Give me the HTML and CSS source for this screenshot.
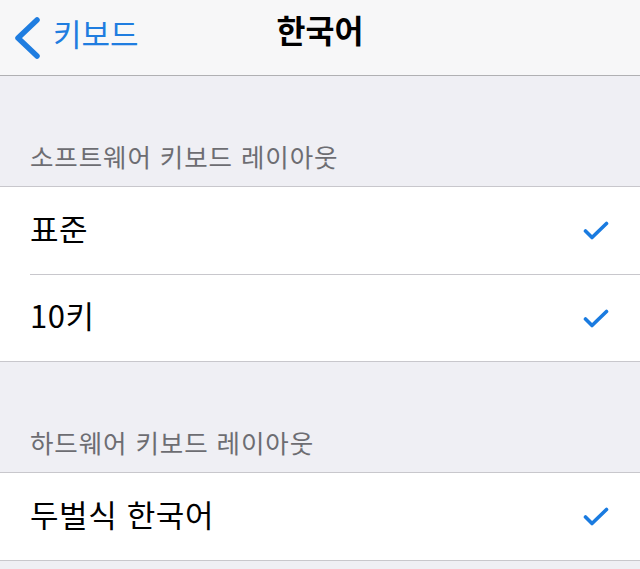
FILE: index.html
```html
<!DOCTYPE html>
<html lang="ko">
<head>
<meta charset="utf-8">
<title>한국어</title>
<link rel="stylesheet" href="styles.css">
</head>
<body>
<header class="nav">
  <a class="back" href="#">
    <svg class="chevron" width="28" height="42" viewBox="0 0 28 42" aria-hidden="true"><polyline points="23,3 4,21 23,39" fill="none" stroke="currentColor" stroke-width="5.5" stroke-linecap="round" stroke-linejoin="round"/></svg>
    <span class="back-label">키보드</span>
  </a>
  <h1 class="title">한국어</h1>
</header>
<main class="list">
  <section class="group">
    <h2 class="group-title">소프트웨어 키보드 레이아웃</h2>
    <ul class="cells">
      <li class="cell"><span class="cell-label">표준</span><svg class="check" width="26" height="19" viewBox="0 0 26 19" aria-hidden="true"><polyline points="2.5,10 9,16.5 23.5,2.5" fill="none" stroke="currentColor" stroke-width="3.6" stroke-linecap="round" stroke-linejoin="round"/></svg></li>
      <li class="cell"><span class="cell-label">10키</span><svg class="check" width="26" height="19" viewBox="0 0 26 19" aria-hidden="true"><polyline points="2.5,10 9,16.5 23.5,2.5" fill="none" stroke="currentColor" stroke-width="3.6" stroke-linecap="round" stroke-linejoin="round"/></svg></li>
    </ul>
  </section>
  <section class="group">
    <h2 class="group-title">하드웨어 키보드 레이아웃</h2>
    <ul class="cells">
      <li class="cell"><span class="cell-label">두벌식 한국어</span><svg class="check" width="26" height="19" viewBox="0 0 26 19" aria-hidden="true"><polyline points="2.5,10 9,16.5 23.5,2.5" fill="none" stroke="currentColor" stroke-width="3.6" stroke-linecap="round" stroke-linejoin="round"/></svg></li>
    </ul>
  </section>
</main>
</body>
</html>
```

FILE: styles.css
```css
* { box-sizing: border-box; }
html, body {
  margin: 0;
  padding: 0;
  background: #efeff4;
  font-family: "Noto Sans CJK KR", "Noto Sans", sans-serif;
  height: 569px;
  overflow: hidden;
}
.nav {
  position: relative;
  height: 76px;
  background: #f7f7f8;
  border-bottom: 1px solid #b0b0b3;
  display: flex;
  align-items: center;
  justify-content: center;
}
.back {
  position: absolute;
  left: 14px;
  top: 12px;
  display: flex;
  align-items: center;
  gap: 11px;
  color: #1f7de0;
  text-decoration: none;
  font-size: 31px;
  line-height: 42px;
}
.back-label { padding-bottom: 9px; }
.chevron { display: block; }
.title {
  margin: 0;
  font-size: 31.5px;
  font-weight: 700;
  color: #000;
  line-height: 42px;
  margin-top: -18px;
}
.list { display: flex; flex-direction: column; }
.group-title {
  margin: 0;
  height: 110px;
  display: flex;
  align-items: flex-end;
  padding: 0 0 16px 30px;
  font-size: 25.5px;
  letter-spacing: 0.9px;
  font-weight: 400;
  line-height: 28px;
  color: #6d6d72;
}
.cells {
  list-style: none;
  margin: 0;
  padding: 0;
  background: #fff;
  border-top: 1px solid #c8c7cc;
  border-bottom: 1px solid #c8c7cc;
}
.cell {
  height: 87px;
  display: flex;
  align-items: center;
  justify-content: space-between;
  margin-left: 30px;
  padding-right: 31px;
  font-size: 31px;
  letter-spacing: 0.6px;
  color: #000;
}
.cell-label { padding-bottom: 7px; }
.cell + .cell { border-top: 1px solid #c8c7cc; }
.check { color: #1a7be0; display: block; }
```
